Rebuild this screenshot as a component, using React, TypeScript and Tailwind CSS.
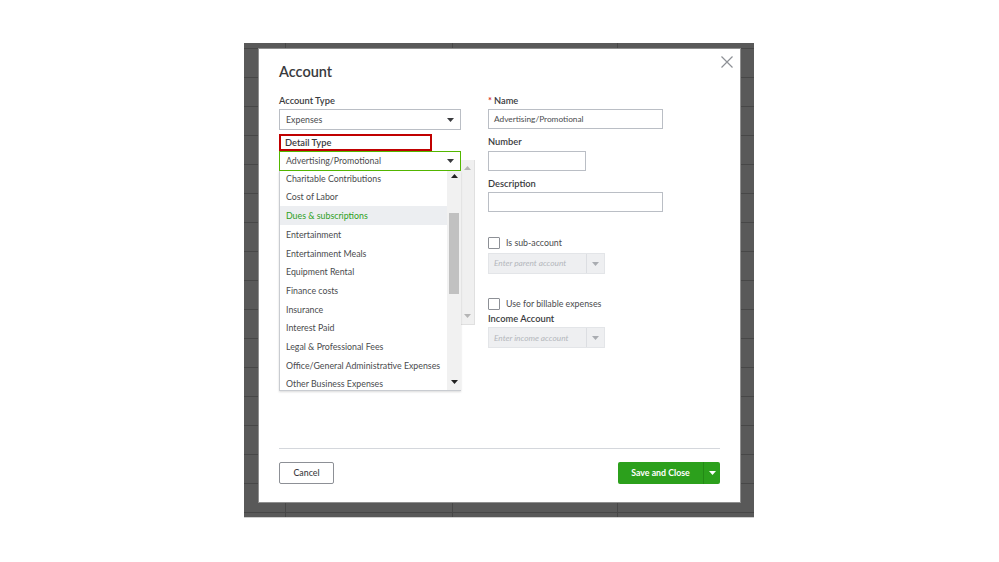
import React from "react";

const font = "font-['Lato','Open_Sans',sans-serif]";

const detailTypes = [
  "Charitable Contributions",
  "Cost of Labor",
  "Dues & subscriptions",
  "Entertainment",
  "Entertainment Meals",
  "Equipment Rental",
  "Finance costs",
  "Insurance",
  "Interest Paid",
  "Legal & Professional Fees",
  "Office/General Administrative Expenses",
  "Other Business Expenses",
];

const Caret = ({ className = "fill-[#393a3d]" }: { className?: string }) => (
  <svg width="7" height="4" viewBox="0 0 7 4" className={className}>
    <path d="M0 0h7L3.5 4z" />
  </svg>
);

const CaretUp = ({ className = "fill-[#393a3d]" }: { className?: string }) => (
  <svg width="7" height="4" viewBox="0 0 7 4" className={className}>
    <path d="M0 4h7L3.5 0z" />
  </svg>
);

const Label = ({ children }: { children: React.ReactNode }) => (
  <div className="text-[9.3px] leading-[12px] font-semibold text-[#393a3d]">{children}</div>
);

const DisabledSelect = ({ placeholder }: { placeholder: string }) => (
  <div className="flex h-[21px] w-[117px] border border-[#e3e5e8] bg-[#eeeff1]">
    <div className="flex flex-1 items-center pl-[5px] text-[8.3px] italic text-[#b4b7bc]">{placeholder}</div>
    <div className="flex w-[18px] items-center justify-center border-l border-[#dcdee2]">
      <Caret className="fill-[#a9acb1]" />
    </div>
  </div>
);

const Checkbox = ({ label }: { label: string }) => (
  <div className="flex items-center gap-[6px]">
    <div className="h-[12px] w-[12px] rounded-[1px] border border-[#8d9096] bg-white" />
    <span className="text-[8.8px] text-[#4a4b4e]">{label}</span>
  </div>
);

export default function App() {
  return (
    <div className={`h-[562px] w-[999px] bg-white pl-[244px] pt-[43px] ${font}`}>
      {/* dimmed page behind the dialog */}
      <div className="h-[475px] w-[510px] border-b border-[#cfcfcf] bg-[#595959] px-[15px] pt-[6px] [background-image:repeating-linear-gradient(to_bottom,transparent_0,transparent_5px,#474747_5px,#474747_6px,transparent_6px,transparent_29px),linear-gradient(to_right,transparent_41px,#474747_41px,#474747_42px,transparent_42px,transparent_208px,#474747_208px,#474747_209px,transparent_209px,transparent_373px,#474747_373px,#474747_374px,transparent_374px)]">
        <div className="relative flex h-[453px] w-[481px] flex-col bg-white px-[20px] pt-[14px] pb-[18px] shadow-[0_0_0_1px_#8f8f8f]">
          <button className="absolute right-[7px] top-[7px] text-[#8d9096]">
            <svg width="12" height="12" viewBox="0 0 12 12" stroke="currentColor" strokeWidth="1.2">
              <path d="M0.5 0.5l11 11M11.5 0.5l-11 11" />
            </svg>
          </button>

          <div className="text-[14.5px] leading-[18px] font-semibold text-[#393a3d]">Account</div>

          <div className="mt-[14px] flex flex-1 gap-[27px]">
            {/* left column */}
            <div className="w-[182px]">
              <Label>Account Type</Label>
              <div className="mt-[2px] flex h-[21px] items-center justify-between border border-[#babec5] px-[6px] text-[8.8px] text-[#4a4b4e]">
                <span>Expenses</span>
                <Caret />
              </div>
              <div className="mt-[4px] flex h-[17px] w-[153px] items-center border-2 border-[#c00000] pl-[4px]">
                <Label>Detail Type</Label>
              </div>
              <div className="relative">
                <div className="flex h-[20px] items-center justify-between border border-[#53b700] px-[6px] text-[8.8px] text-[#4a4b4e]">
                  <span>Advertising/Promotional</span>
                  <Caret />
                </div>

                {/* listbox behind the open menu */}
                <div className="absolute left-[182px] top-[9px] flex h-[165px] w-[14px] flex-col items-center justify-between border-b border-r border-[#e0e0e0] bg-[#f0f0f0] py-[6px]">
                  <CaretUp className="fill-[#b5b5b5]" />
                  <Caret className="fill-[#b5b5b5]" />
                </div>

                {/* open menu */}
                <div className="absolute left-0 top-full z-10 flex h-[220px] w-[182px] overflow-hidden border-b border-l border-[#c9ccd1] bg-white shadow-[0_1px_2px_rgba(0,0,0,0.15)]">
                  <div className="flex-1 overflow-hidden">
                    <div className="-mt-[2px]">
                      {detailTypes.map((t) => (
                        <div
                          key={t}
                          className={`flex h-[18.7px] items-center pl-[6px] text-[8.8px] ${
                            t === "Dues & subscriptions" ? "bg-[#eceef1] text-[#2ca01c]" : "text-[#4a4b4e]"
                          }`}
                        >
                          {t}
                        </div>
                      ))}
                    </div>
                  </div>
                  <div className="flex w-[14px] flex-col items-center bg-[#f1f1f1]">
                    <div className="mt-[3px]">
                      <CaretUp className="fill-[#222]" />
                    </div>
                    <div className="mt-[35px] h-[81px] w-[10px] bg-[#c1c1c1]" />
                    <div className="mt-auto mb-[6px]">
                      <Caret className="fill-[#222]" />
                    </div>
                  </div>
                </div>
              </div>
            </div>

            {/* right column */}
            <div className="w-[175px]">
              <Label>
                <span className="mr-[2px] text-[#d52b1e]">*</span>Name
              </Label>
              <div className="mt-[2px] flex h-[20px] items-center border border-[#babec5] px-[5px] text-[8.3px] text-[#4a4b4e]">
                Advertising/Promotional
              </div>
              <div className="mt-[7px]">
                <Label>Number</Label>
              </div>
              <div className="mt-[3px] h-[20px] w-[98px] border border-[#babec5]" />
              <div className="mt-[7px]">
                <Label>Description</Label>
              </div>
              <div className="mt-[2px] h-[20px] border border-[#babec5]" />
              <div className="mt-[24px]">
                <Checkbox label="Is sub-account" />
              </div>
              <div className="mt-[4px]">
                <DisabledSelect placeholder="Enter parent account" />
              </div>
              <div className="mt-[23px]">
                <Checkbox label="Use for billable expenses" />
              </div>
              <div className="mt-[3px]">
                <Label>Income Account</Label>
              </div>
              <div className="mt-[2px]">
                <DisabledSelect placeholder="Enter income account" />
              </div>
            </div>
          </div>

          {/* footer */}
          <div className="border-t border-[#d4d7dc]" />
          <div className="mt-[13px] flex items-center justify-between">
            <button className="flex h-[22px] w-[55px] items-center justify-center rounded-[2px] border border-[#8d9096] text-[8.8px] font-medium text-[#393a3d]">
              Cancel
            </button>
            <div className="flex h-[22px] w-[102px] rounded-[2px] bg-[#2ca01c] text-white">
              <div className="flex flex-1 items-center justify-center text-[8.8px] font-bold">Save and Close</div>
              <div className="flex w-[17px] items-center justify-center border-l border-[#238a15]">
                <Caret className="fill-white" />
              </div>
            </div>
          </div>
        </div>
      </div>
    </div>
  );
}
